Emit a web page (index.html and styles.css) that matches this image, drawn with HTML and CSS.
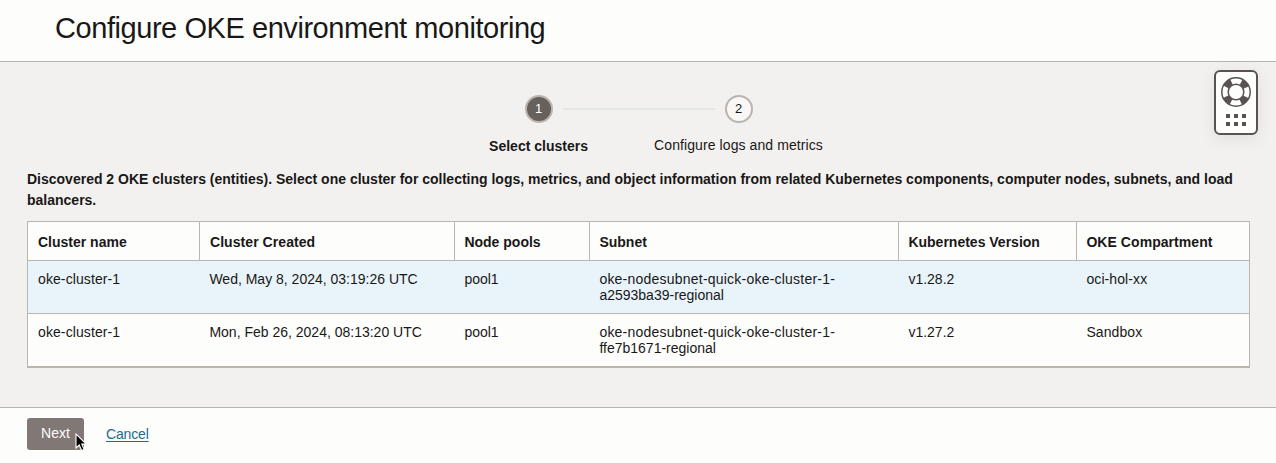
FILE: index.html
```html
<!DOCTYPE html>
<html lang="en">
<head>
<meta charset="utf-8">
<title>Configure OKE environment monitoring</title>
<link rel="stylesheet" href="styles.css">
</head>
<body>
<header class="header"><h1 class="title">Configure OKE environment monitoring</h1></header>
<main class="main">
  <div class="steps">
    <div class="step step-active"><span class="dot">1</span><span class="step-label">Select clusters</span></div>
    <div class="connector"></div>
    <div class="step"><span class="dot">2</span><span class="step-label">Configure logs and metrics</span></div>
  </div>
  <p class="intro"><span class="intro-line">Discovered 2 OKE clusters (entities). Select one cluster for collecting logs, metrics, and object information from related Kubernetes components, computer nodes, subnets, and load</span> balancers.</p>
  <table class="clusters">
    <colgroup><col class="c-name"><col class="c-created"><col class="c-pools"><col class="c-subnet"><col class="c-version"><col class="c-comp"></colgroup>
    <thead><tr><th>Cluster name</th><th class="h-created">Cluster Created</th><th>Node pools</th><th>Subnet</th><th>Kubernetes Version</th><th class="h-comp">OKE Compartment</th></tr></thead>
    <tbody>
      <tr class="selected"><td class="name">oke-cluster-1</td><td>Wed, May 8, 2024, 03:19:26 UTC</td><td>pool1</td><td><span class="subnet">oke-nodesubnet-quick-oke-cluster-1-</span><br>a2593ba39-regional</td><td>v1.28.2</td><td class="name">oci-hol-xx</td></tr>
      <tr><td class="name">oke-cluster-1</td><td>Mon, Feb 26, 2024, 08:13:20 UTC</td><td>pool1</td><td><span class="subnet">oke-nodesubnet-quick-oke-cluster-1-</span><br>ffe7b1671-regional</td><td>v1.27.2</td><td class="name">Sandbox</td></tr>
    </tbody>
  </table>
</main>
<footer class="footer">
  <button class="next" type="button">Next</button>
  <a class="cancel" href="#">Cancel</a>
</footer>
<aside class="help">
  <svg width="32" height="52" viewBox="0 0 32 52">
    <circle cx="16" cy="16" r="11.3" fill="#fdfdfc"/>
    <circle cx="16" cy="16" r="11.1" fill="none" stroke="#585351" stroke-width="6.4" stroke-dasharray="7.4 10.036" stroke-dashoffset="-5.018"/>
    <g fill="none" stroke="#585351" stroke-width="1.5"><circle cx="16" cy="16" r="14.2"/><circle cx="16" cy="16" r="7.8"/></g>
    <path fill="#585351" d="M6 38h4v4H6zM14 38h4v4h-4zM22 38h4v4h-4zM6 46h4v4H6zM14 46h4v4h-4zM22 46h4v4h-4z"/>
  </svg>
</aside>
<svg class="cursor" width="14" height="20" viewBox="0 0 14 20"><path d="M1 1v14l3.2-3 2.4 5.5 2.5-1.1-2.3-5.3h4.5z" fill="#000" stroke="#fff" stroke-width="1.1"/></svg>
</body>
</html>
```
FILE: styles.css
```css
* { box-sizing: border-box; }
body {
  margin: 0;
  height: 463px;
  overflow: hidden;
  display: flex;
  flex-direction: column;
  background: #fdfdfc;
  color: #191817;
  font: 14px/16px "Liberation Sans", Arial, sans-serif;
}
.header { height: 62px; padding: 10px 55px 0; border-bottom: 1px solid #b5b2af; }
.title { margin: 0; font-size: 29px; line-height: 36px; font-weight: 400; letter-spacing: -0.44px; white-space: nowrap; }
.main { height: 345px; padding: 33px 26px 0 27px; background: #f3f1f0; }
.steps { display: flex; justify-content: center; height: 74px; }
.step { width: 176px; display: flex; flex-direction: column; align-items: center; }
.step-label { margin-top: 14px; white-space: nowrap; letter-spacing: 0.09px; }
.step-active .step-label { font-weight: 700; margin-top: 15px; letter-spacing: 0; }
.dot {
  width: 28px;
  height: 28px;
  border: 2px solid #bbb4ae;
  border-radius: 50%;
  background: #f9f8f7;
  display: flex;
  align-items: center;
  justify-content: center;
  font-size: 13px;
}
.step-active .dot { background: #67605b; color: #fff; }
.connector { width: 152px; height: 2px; margin: 13px -64px 0; background: #e3e6e2; }
.intro { margin: 0; font-weight: 700; line-height: 21px; }
.intro-line { display: block; white-space: nowrap; }
.clusters {
  width: 1223px;
  margin-top: 10px;
  table-layout: fixed;
  border-collapse: separate;
  border-spacing: 0;
  border: 1px solid #bab5af;
  border-bottom-width: 2px;
  background: #fdfdfc;
}
.c-name { width: 172px; }
.c-created { width: 255px; }
.c-pools { width: 135px; }
.c-subnet { width: 309px; }
.c-version { width: 178px; }
.c-comp { width: 172px; }
th { height: 39px; padding: 2px 10px 0 9.4px; text-align: left; border-right: 1px solid #bab5af; border-bottom: 1px solid #bab5af; white-space: nowrap; }
th:first-child, td:first-child { padding-left: 10px; }
th:last-child { border-right: 0; }
.h-created { padding-left: 10px; letter-spacing: 0.06px; }
.h-comp { letter-spacing: 0.06px; }
td { height: 53px; padding: 10px 10px 0 9.4px; vertical-align: top; white-space: nowrap; border-bottom: 1px solid #bab5af; }
tbody tr:last-child td { height: 52px; border-bottom: 0; }
.name { letter-spacing: 0.1px; }
.subnet { letter-spacing: 0.22px; }
.selected { background: #e8f3fa; }
.footer { height: 56px; padding: 10px 27px 0; display: flex; gap: 22px; border-top: 1px solid #bab5af; }
.next { width: 57px; height: 32px; padding: 0 0 2px; border: 0; border-radius: 3px; background: #817876; color: #fdfdfc; font: inherit; }
.cancel { align-self: flex-start; margin-top: 8px; color: #216b91; letter-spacing: -0.15px; text-underline-offset: 2px; }
.help {
  position: absolute;
  left: 1214px;
  top: 70px;
  width: 44px;
  height: 65px;
  padding: 4px;
  border: 2px solid #585351;
  border-radius: 6px;
  background: #fdfdfc;
  box-shadow: 0 4px 16px rgba(60, 45, 40, .09);
}
.help svg { display: block; }
.cursor { position: absolute; left: 75px; top: 433px; }
```
